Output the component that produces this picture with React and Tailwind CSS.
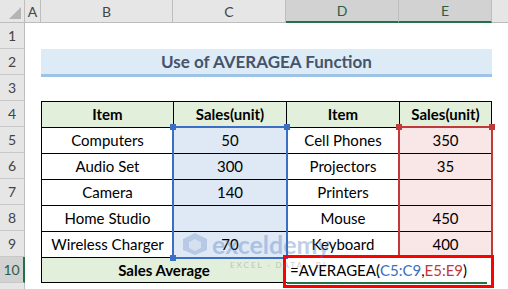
import React from 'react';

const colHead = 'flex items-center justify-center border-r border-b border-[#bdbdbd] bg-[#e6e6e6] text-[14px] text-[#444]';
const colHeadSel = 'flex items-center justify-center border-r border-[#bdbdbd] border-b-2 border-b-[#217346] bg-[#d2d2d2] text-[14px] text-[#2a5f45]';
const rowHead = 'flex items-center justify-center border-r border-b border-[#c8c8c8] border-r-[#bdbdbd] bg-[#e6e6e6] text-[14px] text-[#444]';
const cell = 'flex items-center justify-center border-l border-t border-black text-[15px]';

const rows = [
  ['Computers', '50', 'Cell Phones', '350'],
  ['Audio Set', '300', 'Projectors', '35'],
  ['Camera', '140', 'Printers', ''],
  ['Home Studio', '', 'Mouse', '450'],
  ['Wireless Charger', '70', 'Keyboard', '400'],
];

const Blank = () => <div />;

const App = () => {
  return (
    <div className="relative h-[289px] w-[508px] overflow-hidden bg-white font-['Lato',sans-serif] text-black">
      <div className="grid grid-cols-[25px_16px_132px_113px_113px_93px_16px] grid-rows-[23px_repeat(11,26px)]">
        {/* column headers */}
        <div className="relative border-r border-b border-[#bdbdbd] bg-[#e6e6e6]">
          <div className="absolute right-[3px] bottom-[3px] h-0 w-0 border-l-[12px] border-l-transparent [border-bottom:12px_solid_#b4b4b4]" />
        </div>
        <div className={colHead}>A</div>
        <div className={colHead}>B</div>
        <div className={colHead}>C</div>
        <div className={colHeadSel}>D</div>
        <div className={colHeadSel}>E</div>
        <div className="border-b border-[#bdbdbd] bg-[#e6e6e6]" />

        {/* row 1 */}
        <div className={rowHead}>1</div>
        <Blank /><Blank /><Blank /><Blank /><Blank /><Blank />

        {/* row 2 */}
        <div className={rowHead}>2</div>
        <Blank />
        <div className="col-span-4 flex h-[28px] items-center justify-center self-start border-b-[3px] border-[#9dc3e6] bg-[#ddebf7] text-[17px] font-bold text-[#44546a]">
          Use of AVERAGEA Function
        </div>
        <Blank />

        {/* row 3 */}
        <div className={rowHead}>3</div>
        <Blank /><Blank /><Blank /><Blank /><Blank /><Blank />

        {/* row 4 */}
        <div className={rowHead}>4</div>
        <Blank />
        <div className={`${cell} bg-[#e2efda] font-bold`}>Item</div>
        <div className={`${cell} bg-[#e2efda] font-bold`}>Sales(unit)</div>
        <div className={`${cell} bg-[#e2efda] font-bold`}>Item</div>
        <div className={`${cell} border-r bg-[#e2efda] font-bold`}>Sales(unit)</div>
        <Blank />

        {rows.map((r, i) => (
          <React.Fragment key={i}>
            <div className={rowHead}>{i + 5}</div>
            <Blank />
            <div className={cell}>{r[0]}</div>
            <div className={`${cell} bg-[#dfe9f6]`}>{r[1]}</div>
            <div className={cell}>{r[2]}</div>
            <div className={`${cell} border-r bg-[#f9e6e6]`}>{r[3]}</div>
            <Blank />
          </React.Fragment>
        ))}

        {/* row 10 */}
        <div className="flex items-center justify-center border-b border-r-2 border-[#c8c8c8] border-r-[#217346] bg-[#d2d2d2] text-[14px] text-[#2a5f45]">10</div>
        <Blank />
        <div className={`${cell} col-span-2 border-b bg-[#e2efda] font-bold`}>Sales Average</div>
        <div className="col-span-2 flex items-center border-t border-r border-b border-black bg-white pl-[4px] text-[15px]">
          =AVERAGEA(<span className="text-[#3a6fc4]">C5:C9</span>,<span className="text-[#c0393b]">E5:E9</span>)
        </div>
        <Blank />

        {/* row 11 */}
        <div className={rowHead} />
        <Blank /><Blank /><Blank /><Blank /><Blank /><Blank />
      </div>

      {/* formula reference ranges */}
      <div className="pointer-events-none absolute left-[172px] top-[126px] h-[133px] w-[116px] border-2 border-[#3a6fc4]">
        <div className="absolute -left-[4px] -top-[4px] h-[6px] w-[6px] bg-[#3a6fc4]" />
        <div className="absolute -right-[4px] -top-[4px] h-[6px] w-[6px] bg-[#3a6fc4]" />
        <div className="absolute -bottom-[4px] -left-[4px] h-[6px] w-[6px] bg-[#3a6fc4]" />
      </div>
      <div className="pointer-events-none absolute left-[398px] top-[126px] h-[131px] w-[95px] border-2 border-[#c0393b]">
        <div className="absolute -left-[4px] -top-[4px] h-[6px] w-[6px] bg-[#c0393b]" />
        <div className="absolute -right-[4px] -top-[4px] h-[6px] w-[6px] bg-[#c0393b]" />
      </div>

      {/* edit cell highlight */}
      <div className="pointer-events-none absolute left-[283px] top-[255px] h-[33px] w-[211px] border-[3px] border-[#ff0000]">
        <div className="absolute bottom-[1px] left-[1px] right-[3px] h-[2px] bg-[#217346]" />
        <div className="absolute bottom-0 right-0 h-[4px] w-[4px] bg-white" />
      </div>

      {/* watermark */}
      <div className="pointer-events-none absolute left-[182px] top-[232px] flex flex-col opacity-35">
        <div className="flex items-end gap-[4px]">
          <svg width="26" height="24" viewBox="0 0 26 24">
            <polygon points="13,1 25,7 25,18 13,23 1,18 1,7" fill="#6f8fc3" />
            <polygon points="13,7 19,10 19,16 13,19 7,16 7,10" fill="#ffffff" opacity="0.6" />
          </svg>
          <span className="text-[25px] font-bold leading-[24px] text-[#4a78c2]">exceldemy</span>
        </div>
        <span className="ml-[48px] mt-[5px] text-[8px] leading-[8px] tracking-[2px] text-[#777]">EXCEL · DATA · BI</span>
      </div>
    </div>
  );
};

export default App;
